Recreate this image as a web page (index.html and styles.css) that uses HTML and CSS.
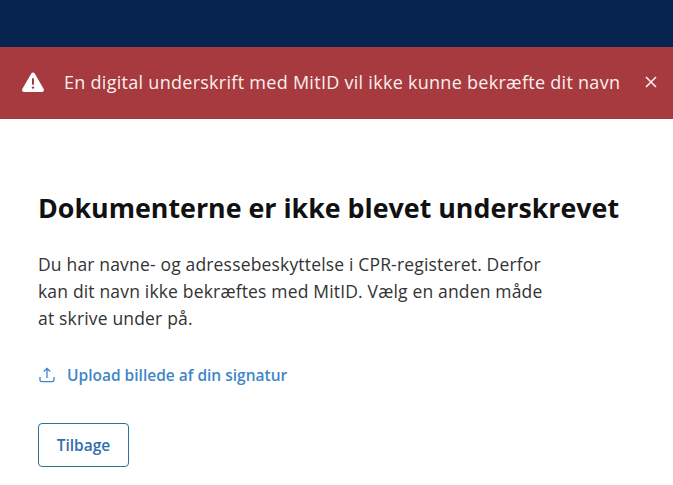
FILE: index.html
```html
<!DOCTYPE html>
<html lang="da">
<head>
<meta charset="utf-8">
<title>Dokumenterne er ikke blevet underskrevet</title>
<link rel="stylesheet" href="styles.css">
</head>
<body>
<header class="topbar"></header>
<div class="alert">
  <svg class="alert-icon" viewBox="0 0 24 22" width="24" height="22" aria-hidden="true">
    <path class="tri" d="M12 1.500c.7 0 1.300.4 1.700 1l9 15.600c.8 1.300-.2 2.900-1.700 2.900H3c-1.500 0-2.500-1.600-1.700-2.900l9-15.600c.4-.6 1-1 1.700-1z"/>
    <rect class="mark" x="11" y="7" width="2" height="7" rx="1"/>
    <circle class="mark" cx="12" cy="16.600" r="1.200"/>
  </svg>
  <span class="alert-text">En digital underskrift med MitID vil ikke kunne bekræfte dit navn</span>
  <svg class="alert-close" viewBox="0 0 12 12" width="12" height="12" aria-hidden="true">
    <path d="M1 1l10 10M11 1L1 11"/>
  </svg>
</div>
<main class="content">
  <h1>Dokumenterne er ikke blevet underskrevet</h1>
  <p>Du har navne- og adressebeskyttelse i CPR-registeret. Derfor<br>kan dit navn ikke bekræftes med MitID. Vælg en anden måde<br>at skrive under på.</p>
  <a class="upload" href="#">
    <svg viewBox="0 0 16 16" width="16" height="16" aria-hidden="true">
      <path d="M8 11V1.500M4.800 4.500L8 1.300l3.200 3.200M1 10v3c0 1 .7 1.700 1.700 1.700h10.600c1 0 1.700-.7 1.700-1.700v-3"/>
    </svg>
    <span>Upload billede af din signatur</span>
  </a>
  <button class="back" type="button">Tilbage</button>
</main>
</body>
</html>
```

FILE: styles.css
```css
* { box-sizing: border-box; }
html, body { margin: 0; padding: 0; background: #fff; }
body { font-family: "Open Sans", "Noto Sans", sans-serif; color: #1a1a1a; height: 485px; overflow: hidden; }
.topbar { height: 47px; background: #07234f; }
.alert {
  height: 72px;
  background: #a63a3f;
  color: #fbeeee;
  display: flex;
  align-items: center;
  padding: 0 16px 2px 21px;
}
.alert-icon { flex: none; margin-right: 19px; }
.tri { fill: #fff; }
.mark { fill: #a63a3f; }
.alert-text { flex: 1; white-space: nowrap; font-size: 18px; letter-spacing: 0.280px; }
.alert-close { flex: none; fill: none; stroke: #fbeeee; stroke-width: 1.600; }
.content { padding: 71px 0 0 38px; }
h1 { margin: 0; font-size: 26.800px; line-height: 36px; font-weight: 700; color: #111; white-space: nowrap; }
p { margin: 25px 0 0; font-size: 17.500px; line-height: 27px; color: #333; letter-spacing: 0.170px; }
.upload {
  display: flex;
  align-items: center;
  gap: 12px;
  margin-top: 31px;
  color: #3f86c8;
  font-size: 15.500px;
  font-weight: 600;
  text-decoration: none;
  height: 24px;
}
.upload svg { fill: none; stroke: #3f86c8; stroke-width: 1.300; flex: none; margin-left: 1px; }
.back {
  display: block;
  margin-top: 36px;
  width: 91px;
  height: 44px;
  background: #fff;
  border: 1.500px solid #2f7197;
  border-radius: 4px;
  color: #2f6fb0;
  font: 600 15.500px "Open Sans", sans-serif;
  padding: 0;
}
```
